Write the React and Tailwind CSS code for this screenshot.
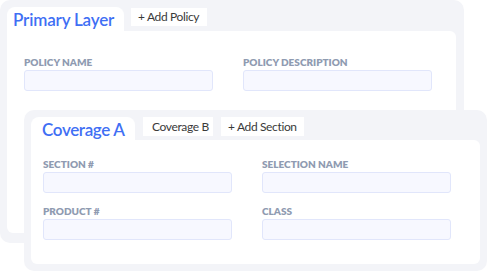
const font = { fontFamily: 'Lato, "Open Sans", sans-serif' }

function Field({ label }) {
  return (
    <div className="flex flex-col">
      <span className="text-[10px] leading-[14px] font-extrabold text-[#8f9bb1] mb-px whitespace-nowrap">{label}</span>
      <div className="w-[189px] h-[21px] rounded-[3px] border border-[#e1e6fb] bg-[#f7f8ff]" />
    </div>
  )
}

export default function App() {
  return (
    <div style={font} className="relative w-[488px] h-[271px] bg-white overflow-hidden">
      {/* primary layer card */}
      <div className="w-[464px] h-[243px] rounded-[10px] bg-[#f3f4f8] pt-[7px] pl-[7px] pr-2 pb-[10px] flex flex-col">
        <div className="flex items-start gap-[7px]">
          <div className="h-[24px] w-[117px] rounded-t-[8px] bg-white pl-[6px] text-[17px] leading-[25px] font-semibold tracking-[-0.01em] text-[#3f6ff4] whitespace-nowrap">
            Primary Layer
          </div>
          <div className="mt-px h-[18px] w-[76px] pl-[7px] bg-white text-[12px] leading-[18px] tracking-[-0.03em] text-[#3a3a3a] whitespace-nowrap">+ Add Policy</div>
        </div>
        <div className="flex-1 bg-white rounded-tr-[6px] rounded-b-[6px] pl-[17px] pt-[24px]">
          <div className="grid grid-cols-[189px_189px] gap-x-[30px]">
            <Field label="POLICY NAME" />
            <Field label="POLICY DESCRIPTION" />
          </div>
        </div>
      </div>

      {/* coverage card */}
      <div className="absolute left-[24px] top-[110px] w-[463px] h-[161px] rounded-[10px] bg-[#f3f4f8] p-[7px] flex flex-col">
        <div className="flex items-start gap-[8px]">
          <div className="h-[23px] w-[104px] rounded-t-[8px] bg-white pl-[11px] text-[17px] leading-[26px] font-semibold tracking-[-0.02em] text-[#3f6ff4] whitespace-nowrap">
            Coverage A
          </div>
          <div className="h-[19px] w-[70px] pl-[9px] bg-white text-[12px] leading-[19px] tracking-[-0.03em] text-[#3a3a3a] whitespace-nowrap">Coverage B</div>
          <div className="h-[19px] w-[83px] pl-[7px] bg-white text-[12px] leading-[19px] tracking-[-0.03em] text-[#3a3a3a] whitespace-nowrap">+ Add Section</div>
        </div>
        <div className="flex-1 bg-white rounded-tr-[6px] rounded-b-[6px] pl-[12px] pt-[17px]">
          <div className="grid grid-cols-[189px_189px] gap-x-[30px] gap-y-[11px]">
            <Field label="SECTION #" />
            <Field label="SELECTION NAME" />
            <Field label="PRODUCT #" />
            <Field label="CLASS" />
          </div>
        </div>
      </div>
    </div>
  )
}
